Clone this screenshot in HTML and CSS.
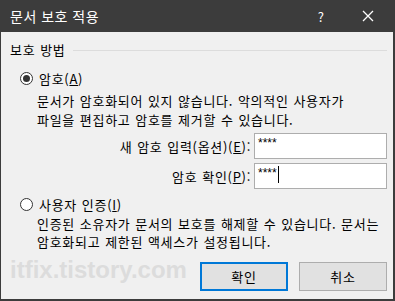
FILE: index.html
```html
<!DOCTYPE html>
<html lang="ko">
<head>
<meta charset="utf-8">
<link rel="stylesheet" href="styles.css">
</head>
<body>
<div class="window">
  <div class="titlebar">
    <span class="title">문서 보호 적용</span>
    <span class="help">?</span>
    <svg class="close" width="12" height="12" viewBox="0 0 12 12"><path d="M1 1L11 11M11 1L1 11" stroke="#fff" stroke-width="1.3" fill="none"/></svg>
  </div>
  <div class="content">
    <div class="group-head"><span>보호 방법</span><div class="rule"></div></div>
    <div class="option">
      <span class="radio checked"></span><span>암호(<u>A</u>)</span>
    </div>
    <p class="desc">문서가 암호화되어 있지 않습니다. 악의적인 사용자가<br>파일을 편집하고 암호를 제거할 수 있습니다.</p>
    <div class="fields">
      <div class="field"><label>새 암호 입력(옵션)(<u>E</u>):</label><div class="input">****</div></div>
      <div class="field"><label>암호 확인(<u>P</u>):</label><div class="input">****<span class="caret"></span></div></div>
    </div>
    <div class="option opt2">
      <span class="radio"></span><span>사용자 인증(<u>I</u>)</span>
    </div>
    <p class="desc desc2">인증된 소유자가 문서의 보호를 해제할 수 있습니다. 문서는<br>암호화되고 제한된 액세스가 설정됩니다.</p>
    <div class="footer">
      <span class="watermark">itfix.tistory.com</span>
      <div class="btn primary">확인</div>
      <div class="btn">취소</div>
    </div>
  </div>
</div>
</body>
</html>
```
FILE: styles.css
```css
* { box-sizing: border-box; }
html, body { margin: 0; padding: 0; }
body {
  font-family: "Noto Sans CJK KR", "Noto Sans", sans-serif;
  font-size: 12px;
  color: #000;
  background: #3c3c3c;
}
.window {
  width: 395px;
  height: 301px;
  border-left: 1px solid #3c3c3c;
  border-right: 2px solid #3c3c3c;
  border-bottom: 2px solid #3c3c3c;
  display: flex;
  flex-direction: column;
}
.titlebar {
  height: 32px;
  background: #3c3c3c;
  color: #fff;
  display: flex;
  align-items: center;
  padding-left: 9px;
  flex: none;
}
.title { font-size: 14px; letter-spacing: 0.5px; flex: 1; }
.help { font-size: 13px; margin-right: 38px; }
.close { margin-right: 19px; }
.content {
  flex: 1;
  background: #f0f0f0;
  display: flex;
  flex-direction: column;
  padding: 8px 6px 0 9px;
  letter-spacing: 0.7px;
  word-spacing: 0.5px;
}
.group-head {
  display: flex;
  align-items: center;
  height: 18px;
  font-size: 13px;
}
.rule { flex: 1; height: 1px; background: #dcdcdc; margin-left: 8px; margin-top: 2px; }
.option {
  display: flex;
  align-items: center;
  margin-top: 11px;
  padding-left: 10px;
  height: 18px;
  font-size: 13px;
}
.radio {
  width: 13px;
  height: 13px;
  border: 1px solid #333;
  border-radius: 50%;
  background: #fff;
  margin-right: 6px;
  display: flex;
  align-items: center;
  justify-content: center;
}
.radio.checked::after {
  content: "";
  width: 7px;
  height: 7px;
  border-radius: 50%;
  background: #333;
}
.desc {
  margin: 4px 0 0 27px;
  line-height: 19px;
  font-size: 13px;
  white-space: nowrap;
}
.fields {
  display: flex;
  flex-direction: column;
  gap: 4px;
  margin-top: 4px;
}
.field {
  display: flex;
  align-items: center;
  justify-content: flex-end;
}
.field label { font-size: 13px; margin-right: 3px; }
.input {
  width: 133px;
  height: 26px;
  border: 1px solid #adadad;
  background: #fff;
  padding: 2px 3px;
  font-family: "Liberation Sans", sans-serif;
  font-size: 12px;
  letter-spacing: 0;
  display: flex;
  align-items: flex-start;
}
.caret { width: 1px; height: 17px; background: #000; margin-left: 1px; }
.opt2 { margin-top: 6px; }
.desc2 { margin-top: 2px; line-height: 18px; }
.footer {
  display: flex;
  align-items: center;
  margin-top: 11px;
}
.watermark {
  font-family: "Liberation Sans", sans-serif;
  font-weight: bold;
  font-size: 24px;
  letter-spacing: 0;
  word-spacing: 0;
  color: #dcdcdc;
  flex: 1;
  margin-top: -14px;
}
.btn {
  width: 88px;
  height: 29px;
  border: 1px solid #adadad;
  background: #e1e1e1;
  display: flex;
  align-items: center;
  justify-content: center;
  font-size: 13px;
  margin-left: 11px;
}
.btn.primary { border: 2px solid #0078d7; margin-left: 0; }
```
